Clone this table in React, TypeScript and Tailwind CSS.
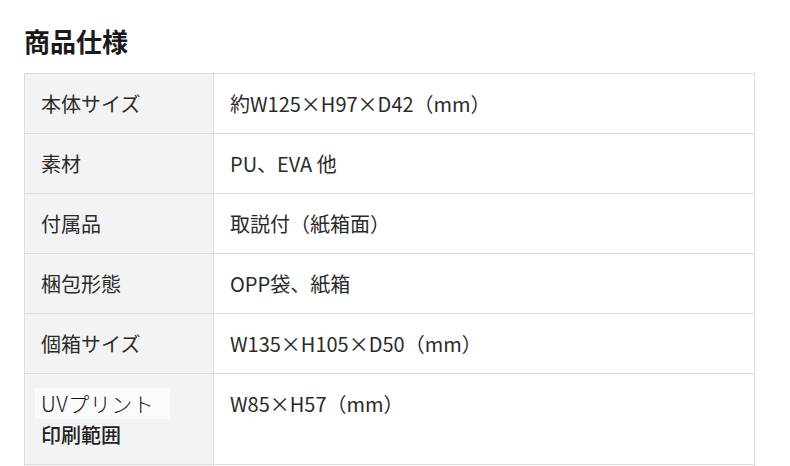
const specs = [
    { label: '本体サイズ', value: '約W125×H97×D42（mm）' },
    { label: '素材', value: 'PU、EVA 他' },
    { label: '付属品', value: '取説付（紙箱面）' },
    { label: '梱包形態', value: 'OPP袋、紙箱' },
    { label: '個箱サイズ', value: 'W135×H105×D50（mm）' },
]

const App = () => {
    return (
        <div className="min-h-[466px] bg-white px-[24px] pt-[22px] text-[#2a2a2a] font-['Noto_Sans_CJK_JP','Noto_Sans',sans-serif]">
            <h2 className="text-[26px] leading-[38px] font-bold text-[#1a1a1a] mb-[13px]">商品仕様</h2>
            <table className="w-[731px] border-collapse border border-[#dddddd] text-[20px] leading-[31px]">
                <tbody>
                    {specs.map((row) => (
                        <tr key={row.label} className="border-b border-[#dddddd]">
                            <th className="w-[189px] bg-[#f3f3f3] border-r border-[#dddddd] px-[16px] py-[14px] text-left font-normal align-middle">
                                {row.label}
                            </th>
                            <td className="px-[16px] py-[14px] align-middle">{row.value}</td>
                        </tr>
                    ))}
                    <tr className="border-b border-[#dddddd]">
                        <th className="bg-[#f3f3f3] border-r border-[#dddddd] px-[16px] py-[14px] text-left font-normal align-top">
                            <span className="block -ml-[6px] pl-[6px] pr-[16px] w-fit bg-[#fbfbfb] font-light tracking-[0.5px] text-[21px] text-[#111]">UVプリント</span>
                            <span className="block text-[#222] font-medium">印刷範囲</span>
                        </th>
                        <td className="px-[16px] py-[14px] align-top">W85×H57（mm）</td>
                    </tr>
                    <tr>
                        <th className="bg-[#f3f3f3] border-r border-[#dddddd] px-[16px] py-[14px] text-left font-normal">&nbsp;</th>
                        <td className="px-[16px] py-[14px]">&nbsp;</td>
                    </tr>
                </tbody>
            </table>
        </div>
    )
}

export default App
